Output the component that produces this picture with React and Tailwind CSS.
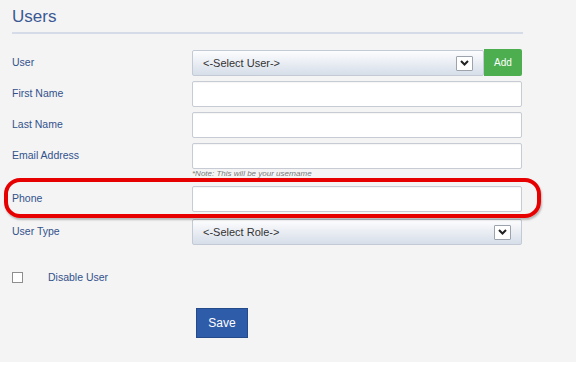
import React from 'react'

const font = { fontFamily: '"Liberation Sans", Arial, sans-serif' }

function Chevron() {
  return (
    <span className="flex w-[17px] h-[15px] items-center justify-center bg-white border border-[#9da3ad] rounded-[1px]">
      <svg width="9" height="6" viewBox="0 0 9 6">
        <path d="M1 1 L4.5 4.5 L8 1" fill="none" stroke="#222" strokeWidth="2" />
      </svg>
    </span>
  )
}

function Select({ label, className = '' }) {
  return (
    <div className={`flex items-center justify-between h-[26px] pl-[10px] pr-[10px] border border-[#c3cad6] rounded-[2px] bg-linear-to-b from-[#fdfdfe] to-[#d6dee9] ${className}`}>
      <span className="text-[11px] text-[#333]">{label}</span>
      <Chevron />
    </div>
  )
}

function Input() {
  return (
    <div className="w-[330px] h-[26px] bg-white border border-[#c6cbd4] rounded-[2px] shadow-[inset_0_1px_1px_rgba(0,0,0,0.04)]" />
  )
}

function Row({ label, children, className = '' }) {
  return (
    <div className={`flex items-center ${className}`}>
      <div className="w-[180px] text-[10.5px] text-[#32528c]">{label}</div>
      {children}
    </div>
  )
}

export default function App() {
  return (
    <div className="w-[576px] h-[366px] bg-white" style={font}>
      <div className="h-[362px] bg-[#f4f4f4] pl-3 pt-[7px]">
        <h2 className="text-[17px] leading-[20px] text-[#3a5893]">Users</h2>
        <div className="mt-[5px] h-[2px] w-[511px] bg-[#d5dce8]" />

        <Row label="User" className="mt-[15px] h-[27px]">
          <div className="flex w-[330px] h-[27px]">
            <Select label="<-Select User->" className="flex-1 mt-[1px] h-[25px] pr-[9px]" />
            <button className="w-[38px] h-[27px] bg-[#4cae4f] text-white text-[10px] rounded-r-[2px]">
              Add
            </button>
          </div>
        </Row>

        <Row label="First Name" className="mt-[5px]">
          <Input />
        </Row>
        <Row label="Last Name" className="mt-[5px]">
          <Input />
        </Row>
        <Row label="Email Address" className="mt-[5px]">
          <Input />
        </Row>
        <div className="pl-[180px] h-[10px] text-[8px] leading-[10px] italic text-[#7a7a7a]">
          *Note: This will be your username
        </div>

        {/* Phone row with red annotation */}
        <div className="relative mt-[7px]">
          <Row label="Phone">
            <Input />
          </Row>
          <div className="absolute left-[-8px] top-[-8px] w-[537px] h-[40px] border-[4px] border-[#e60000] rounded-[16px] shadow-[1px_2px_2px_rgba(0,0,0,0.25)] pointer-events-none" />
        </div>

        <Row label="User Type" className="mt-[7px]">
          <Select label="<-Select Role->" className="w-[330px] pr-[10px]" />
        </Row>

        <div className="flex items-center mt-[27px] h-[11px]">
          <span className="w-[11px] h-[11px] bg-white border border-[#8e8e8e]" />
          <span className="ml-[25px] text-[10.5px] text-[#32528c]">Disable User</span>
        </div>

        <button className="mt-[25px] ml-[184px] w-[52px] h-[30px] bg-[#2f5ca8] text-white text-[12px] border border-[#244a8a]">
          Save
        </button>
      </div>
    </div>
  )
}
